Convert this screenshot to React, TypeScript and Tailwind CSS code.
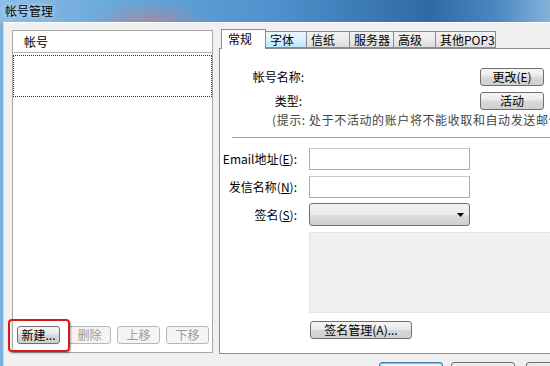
import React from "react"

const font = "font-['Noto_Sans_CJK_SC','Microsoft_YaHei',sans-serif]"

function Btn({ children, w, disabled, className = "" }: { children: React.ReactNode; w: string; disabled?: boolean; className?: string }) {
  return (
    <div
      className={`${w} h-[18px] flex items-center justify-center rounded-[3px] border text-[12px] leading-none whitespace-nowrap ${
        disabled
          ? "border-[#b5b8bb] bg-[#f4f4f4] text-[#9a9a9a]"
          : "border-[#707070] bg-[linear-gradient(#f6f6f6,#e9e9e9_45%,#d9d9d9_50%,#cfcfcf)] text-black"
      } ${className}`}
    >
      {children}
    </div>
  )
}

const tabs = ["字体", "信纸", "服务器", "高级", "其他POP3"]
const tabW = ["w-[41px]", "w-[43px]", "w-[44px]", "w-[42px]", "w-[60px]"]

export default function App() {
  return (
    <div className={`relative w-[550px] h-[366px] overflow-hidden bg-[#f0f0f0] flex flex-col ${font}`}>
      {/* title bar */}
      <div className="h-[22px] shrink-0 bg-[radial-gradient(ellipse_60px_22px_at_150px_24px,rgba(220,120,110,0.55),transparent),linear-gradient(90deg,#8dbde4_0%,#6aa8dc_20%,#4f91cd_50%,#2f6aa5_78%,#4a86c2_90%,#86b2d9_100%)] flex items-center pl-[5px]">
        <span className="text-[12px] text-black [text-shadow:0_0_6px_rgba(255,255,255,0.9)]">帐号管理</span>
      </div>
      {/* frame + client */}
      <div className="flex-1 flex min-h-0 border-l-[3px] border-l-[#7db1dd] bg-[#6fa6d8]">
        <div className="flex-1 flex flex-col bg-[#f0f0f0] border-t border-l border-t-[#ffffff] border-l-[#cfd6dd] min-h-0">
          <div className="flex pl-[8px] pt-[7px]">
            {/* left list panel */}
            <div className="relative w-[201px] h-[323px] bg-white border border-[#a8a8a8] flex flex-col shrink-0">
              <div className="h-[22px] border-b border-[#b4b4b4] flex items-center pl-[11px] text-[12px] text-black">帐号</div>
              <div className="mt-[2px] h-[42px] border border-dotted border-[#333]" />
              <div className="flex-1" />
              <div className="flex gap-[6px] pl-[4px] mb-[8px]">
                <Btn w="w-[43px]">新建...</Btn>
                <Btn w="w-[43px]" disabled className="ml-[2px]">删除</Btn>
                <Btn w="w-[43px]" disabled>上移</Btn>
                <Btn w="w-[43px]" disabled>下移</Btn>
              </div>
            </div>
            {/* tab control */}
            <div className="ml-[6px] flex-1 flex flex-col min-w-0">
              <div className="flex items-end h-[18px] pl-[2px]">
                <div className="relative z-10 shrink-0 w-[45px] h-[20px] -mb-px bg-white border border-b-0 border-[#898c95] flex items-start pl-[6px] pt-[1px] text-[12px] leading-[16px] text-black">常规</div>
                {tabs.map((t, i) => (
                  <div
                    key={t}
                    className={`${tabW[i]} shrink-0 whitespace-nowrap h-[17px] border border-l-0 border-[#898c95] flex items-center pl-[4px] text-[12px] leading-none text-black ${
                      i === 0
                        ? "bg-[linear-gradient(#eaf6fd,#d9f0fc_50%,#bee6fd)] border-[#3c7fb1] border-l"
                        : "bg-[linear-gradient(#f2f2f2,#ebebeb_50%,#dddddd)]"
                    }`}
                  >
                    {t}
                  </div>
                ))}
              </div>
              <div className="h-[306px] w-[340px] shrink-0 bg-white border border-[#898c95] flex flex-col text-[12px] text-black">
                <div className="flex items-center mt-[19px]">
                  <div className="w-[84px] text-right">帐号名称:</div>
                  <Btn w="w-[64px]" className="ml-[176px]">更改(E)</Btn>
                </div>
                <div className="flex items-center mt-[6px]">
                  <div className="w-[82px] text-right">类型:</div>
                  <Btn w="w-[64px]" className="ml-[178px]">活动</Btn>
                </div>
                <div className="pl-[52px] mt-[2px] whitespace-nowrap text-[#444] tracking-[0.6px] leading-[16px]">(提示: 处于不活动的账户将不能收取和自动发送邮件)</div>
                <div className="ml-[12px] mt-[9px] border-t border-[#a0a0a0]" />
                <div className="flex items-center mt-[10px]">
                  <div className="w-[77px] text-right">Email地址(<span className="underline">E</span>):</div>
                  <div className="ml-[12px] w-[161px] h-[22px] border border-[#abadb3] border-t-[#c6c8cc] bg-white" />
                </div>
                <div className="flex items-center mt-[6px]">
                  <div className="w-[77px] text-right">发信名称(<span className="underline">N</span>):</div>
                  <div className="ml-[12px] w-[161px] h-[22px] border border-[#abadb3] border-t-[#c6c8cc] bg-white" />
                </div>
                <div className="flex items-center mt-[5px]">
                  <div className="w-[77px] text-right">签名(<span className="underline">S</span>):</div>
                  <div className="ml-[12px] w-[161px] h-[23px] rounded-[3px] border border-[#707070] bg-[linear-gradient(#f2f2f2,#ebebeb_50%,#dddddd_51%,#cfcfcf)] flex items-center justify-end pr-[5px]">
                    <svg width="7" height="4" viewBox="0 0 7 4"><path d="M0 0h7L3.5 4z" fill="#000" /></svg>
                  </div>
                </div>
                <div className="ml-[89px] mt-[6px] h-[81px] w-[260px] bg-[#f0f0f0] border border-[#dfe6ee]" />
                <Btn w="w-[102px]" className="ml-[90px] mt-[8px]">签名管理(A)...</Btn>
              </div>
            </div>
          </div>
          {/* bottom buttons (partially visible) */}
          <div className="flex pl-[375px] mt-[8px] gap-[8px]">
            <div className="w-[64px] h-[20px] shrink-0 rounded-[3px] border border-[#3c7fb1] bg-[linear-gradient(#eaf6fd,#d9f0fc)] shadow-[inset_0_0_0_1px_#48d7fb]" />
            <div className="w-[64px] h-[20px] shrink-0 rounded-[3px] border border-[#707070] bg-[#ececec]" />
            <div className="w-[64px] h-[20px] shrink-0 rounded-[3px] border border-[#707070] bg-[#ececec] ml-[3px]" />
          </div>
        </div>
      </div>
      {/* highlight around the "新建" button */}
      <div className="absolute left-[8px] top-[319px] w-[62px] h-[33px] rounded-[4px] border-2 border-[#d41c1c] shadow-[1px_1px_2px_rgba(0,0,0,0.35)]" />
    </div>
  )
}
